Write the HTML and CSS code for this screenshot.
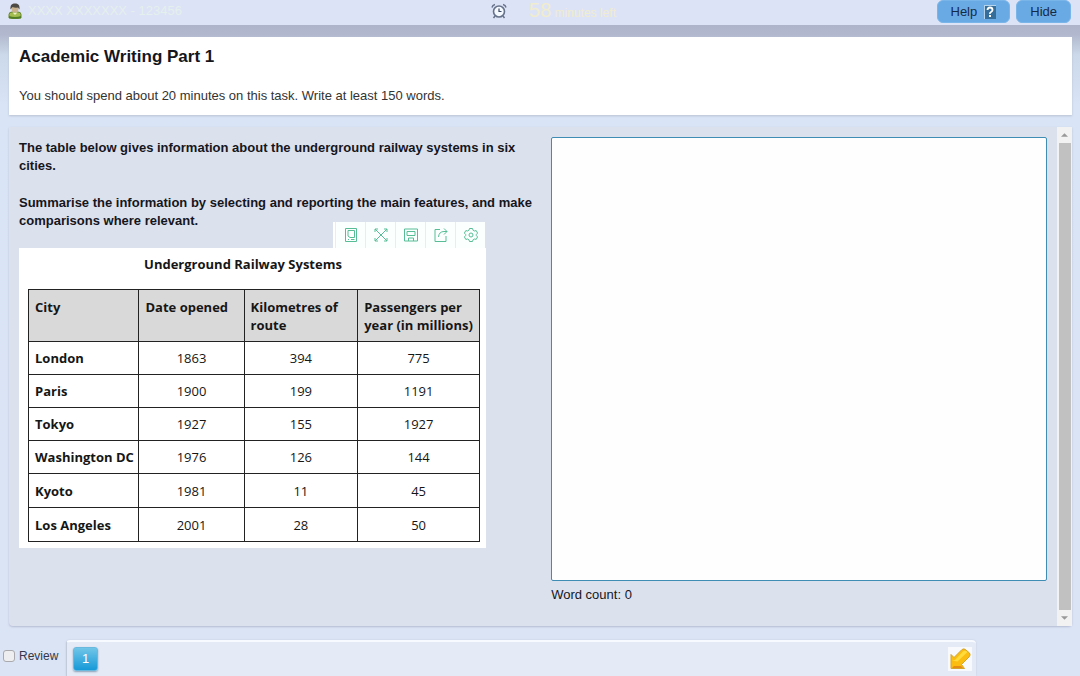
FILE: index.html
```html
<!DOCTYPE html>
<html lang="en">
<head>
<meta charset="utf-8">
<title>Academic Writing Part 1</title>
<link rel="stylesheet" href="styles.css">
</head>
<body>
<header class="topbar">
  <div class="candidate">
    <svg class="user-icon" width="14" height="16" viewBox="0 0 14 16" aria-hidden="true">
      <path d="M1 15V11.5Q1 9 4 9h6q3 0 3 2.500V15Q7 16.500 1 15Z" fill="#a3bd4f" stroke="#66852f"/>
      <path d="M1 13q6 2 12 0v2q-6 1.500-12 0Z" fill="#4f7d25"/>
      <path d="M4.500 9.500L7 12l2.500-2.500Z" fill="#eef0c5"/>
      <circle cx="7" cy="6" r="3.500" fill="#c9b28c"/>
      <path d="M2.500 6.500C2 2 4 .5 7 .5S12 2 11.500 6.500L10 4.500Q7 5 4.500 4Z" fill="#4c4a43"/>
    </svg>
    <span>XXXX XXXXXXX - 123456</span>
  </div>
  <div class="timer">
    <svg width="16" height="16" viewBox="0 0 16 16" fill="none" stroke="#66728a" aria-hidden="true">
      <circle cx="8" cy="8.500" r="5.500" fill="#f4f8ff" stroke-width="1.600"/>
      <path d="M8 5.500v3h2.500" stroke="#3d4a63" stroke-width="1.200"/>
      <path d="M1 4.500Q1.500 2 4 1.500M12 1.500q2.500.5 3 3M4 13l-1.500 2M12 13l1.500 2" stroke-width="1.500"/>
    </svg>
    <span class="time"><span class="time-value">58</span> minutes left</span>
  </div>
  <div class="actions">
    <button type="button" class="action">Help
      <svg width="12" height="14" viewBox="0 0 12 14" aria-hidden="true">
        <rect width="12" height="14" fill="#356e9b"/>
        <path d="M0 14V0h12" fill="none" stroke="#b5d3ea" stroke-width="2"/>
        <path d="M3.500 5Q3.500 2.500 6 2.500T8.500 5Q8.500 6.200 7 7T6 9" fill="none" stroke="#fff" stroke-width="1.800"/>
        <rect x="5" y="10" width="2" height="2" fill="#fff"/>
      </svg>
    </button>
    <button type="button" class="action">Hide</button>
  </div>
</header>
<div class="page">
  <section class="intro">
    <h1>Academic Writing Part 1</h1>
    <p>You should spend about 20 minutes on this task. Write at least 150 words.</p>
  </section>
  <main class="task">
    <section class="question">
      <p>The table below gives information about the underground railway systems in six cities.</p>
      <p>Summarise the information by selecting and reporting the main features, and make comparisons where relevant.</p>
      <figure class="sheet">
        <div class="tools">
          <button type="button" aria-label="Mobile view"><svg viewBox="0 0 14 14"><path d="M1.500 .5h11v13h-11zM4 2.500h6.500v7H6L4 8zM4 11.500h1M7 11.500h3.500"/></svg></button>
          <button type="button" aria-label="Expand"><svg viewBox="0 0 14 14"><path d="M1 4V1h3M10 1h3v3M13 10v3h-3M4 13H1v-3M1 1l12 12M13 1L1 13"/></svg></button>
          <button type="button" aria-label="Save"><svg viewBox="0 0 14 14"><path d="M.5 1h13v12H.5zM3 3.500h8v4H3zM4.500 13V10h5v3"/></svg></button>
          <button type="button" aria-label="Share"><svg viewBox="0 0 14 14"><path d="M6 1.500H1v12h11V8M4.500 9Q5 3.500 10 3.500h3M10 .5l3 3-3 3"/></svg></button>
          <button type="button" aria-label="Settings"><svg viewBox="0 0 14 14"><path d="M5.500.5h3l.6 1.800 1.200.7 1.900-.4 1.400 2.500L12.300 6.500v1l1.300 1.400-1.400 2.500-1.900-.4-1.200.7-.6 1.800h-3l-.6-1.800-1.200-.7-1.900.4L.4 8.900l1.300-1.400v-1L.4 5.100l1.400-2.500 1.900.4 1.200-.7Z"/><circle cx="7" cy="7" r="2"/></svg></button>
        </div>
        <table>
          <caption>Underground Railway Systems</caption>
          <colgroup><col class="c-city"><col class="c-date"><col class="c-route"><col class="c-pass"></colgroup>
          <thead><tr><th scope="col">City</th><th scope="col">Date opened</th><th scope="col">Kilometres of route</th><th scope="col">Passengers per year (in millions)</th></tr></thead>
          <tbody>
            <tr><th scope="row">London</th><td>1863</td><td>394</td><td>775</td></tr>
            <tr><th scope="row">Paris</th><td>1900</td><td>199</td><td>1191</td></tr>
            <tr><th scope="row">Tokyo</th><td>1927</td><td>155</td><td>1927</td></tr>
            <tr><th scope="row">Washington DC</th><td>1976</td><td>126</td><td>144</td></tr>
            <tr><th scope="row">Kyoto</th><td>1981</td><td>11</td><td>45</td></tr>
            <tr><th scope="row">Los Angeles</th><td>2001</td><td>28</td><td>50</td></tr>
          </tbody>
        </table>
      </figure>
    </section>
    <section class="answer">
      <textarea aria-label="Your answer"></textarea>
      <p>Word count: 0</p>
    </section>
    <div class="scrollbar" aria-hidden="true">
      <svg viewBox="0 0 8 4"><path d="M0 4l4-4 4 4Z"/></svg>
      <div class="thumb"></div>
      <svg viewBox="0 0 8 4"><path d="M0 0l4 4 4-4Z"/></svg>
    </div>
  </main>
</div>
<footer class="footer">
  <label class="review"><input type="checkbox">Review</label>
  <nav class="parts">
    <button type="button" class="part">1</button>
    <button type="button" class="next" aria-label="Next">
      <svg width="22" height="22" viewBox="0 0 22 22" aria-hidden="true">
        <path d="M2 20.500V6.500l3 3L13 1.500q2-1.500 4 .5l3.500 3q1.500 2-.5 4L12.500 16.500l3 4Z" fill="#fbbd10" stroke="#d4a52c"/>
        <path d="M3 12.500l3-.5L14.500 3q2-1 4 1L8.500 13.500Z" fill="#ffdb3b"/>
        <path d="M3 20l2-2h7l2 2Z" fill="#e78c12"/>
      </svg>
    </button>
  </nav>
</footer>
</body>
</html>
```
FILE: styles.css
```css
* { box-sizing: border-box; }
body {
  margin: 0;
  min-height: 100vh;
  display: flex;
  flex-direction: column;
  background: #dbe4f5;
  color: #15161c;
  font: 13px/18px "Liberation Sans", Arial, sans-serif;
}
h1, p, figure { margin: 0; }
button { font: inherit; color: inherit; border: 0; padding: 0; }

.topbar {
  display: grid;
  grid-template-columns: 1fr auto 1fr;
  height: 25px;
  padding: 0 9px 0 8px;
  background: #dde3f6;
}
.candidate, .timer { display: flex; align-items: center; padding-bottom: 3px; }
.candidate { gap: 6px; color: #e4f0ed; }
.timer { gap: 22px; padding-left: 28px; }
.time { color: #f0ecce; font-size: 12px; }
.time-value { font-size: 20px; }
.actions { display: flex; justify-content: flex-end; gap: 6px; }
.action {
  display: flex;
  align-items: center;
  justify-content: center;
  gap: 7px;
  height: 23px;
  padding: 0 13px;
  border: 1px solid #79b5e8;
  border-radius: 6px;
  background: #69aae5;
  color: #152b45;
}

.page {
  flex: 1;
  display: flex;
  flex-direction: column;
  gap: 12px;
  padding: 12px 8px 14px 9px;
  background: linear-gradient(#aeb5ca 0, #b2b9ce 10px, #cbd9ea 30px, #d9e4f6 80px, #dbe4f5);
}
.intro {
  padding: 10px 10px 10px;
  background: #fff;
  box-shadow: 0 1px 2px #b9c2d4;
}
.intro h1 { margin-bottom: 20px; font-size: 17px; line-height: 20px; }
.intro p { color: #333; }

.task {
  flex: 1;
  display: flex;
  background: #dce1ee;
  border-radius: 0 0 4px 4px;
  box-shadow: 0 1px 2px #b3bcd2;
}
.question { flex: 533; min-width: 0; padding: 12px 10px 0; }
.question p { margin-bottom: 19px; font-weight: bold; }
.question p + p { margin-bottom: 18px; }
.sheet {
  position: relative;
  width: 467px;
  max-width: 100%;
  padding: 7px 6px 6px 9px;
  background: #fff;
}
.tools {
  position: absolute;
  right: 1px;
  bottom: 100%;
  display: flex;
  padding-left: 2px;
  background: #fff;
}
.tools button {
  display: grid;
  place-items: center;
  width: 30px;
  height: 26px;
  border-left: 1px solid #e8eeee;
  background: #fbfffd;
}
.tools svg { width: 14px; height: 14px; fill: none; stroke: #56bd97; }

table {
  width: 100%;
  table-layout: fixed;
  border-collapse: collapse;
  font: 13px/18px "Open Sans", "Noto Sans", sans-serif;
  color: #161616;
}
caption { padding: 0 22px 16px 0; font-weight: bold; }
.c-city { width: 24.5%; }
.c-date { width: 23.3%; }
.c-route { width: 25.2%; }
.c-pass { width: 27%; }
th, td { height: 33px; padding: 0 6px; border: 1px solid #222; text-align: center; }
tr:nth-child(n+5) td { height: 34px; }
th { text-align: left; white-space: nowrap; }
thead th { height: 52px; padding-top: 8px; background: #d9d9d9; vertical-align: top; white-space: normal; }

.answer { flex: 515; display: flex; flex-direction: column; min-width: 0; padding: 10px 10px 22px 9px; }
.answer textarea {
  flex: 1;
  width: 100%;
  margin-bottom: 5px;
  padding: 6px;
  border: 1px solid #3f8cb5;
  border-radius: 2px;
  background: #fefefe;
  font: inherit;
  resize: none;
}
.scrollbar {
  display: flex;
  flex-direction: column;
  align-items: center;
  width: 15px;
  gap: 6px;
  padding: 6px 2px;
  background: #f2f2f3;
}
.scrollbar svg { width: 7px; height: 4px; fill: #999; }
.thumb { flex: 1; width: 12px; background: #c1c1c2; }

.footer { display: flex; height: 36px; padding-right: 104px; }
.review { display: flex; align-items: center; gap: 4px; width: 66px; padding: 0 0 4px 3px; font-size: 12px; color: #33384a; }
.review input {
  appearance: none;
  width: 12px;
  height: 12px;
  margin: 0;
  border: 1px solid #aaa9ad;
  border-radius: 3px;
  background: #eeeef0;
}
.parts {
  flex: 1;
  display: flex;
  align-items: center;
  justify-content: space-between;
  padding: 0 4px 0 6px;
  border-top: 2px solid #f7faff;
  border-left: 1px solid #c1cbd9;
  border-radius: 4px 4px 0 0;
  background: #e5ebf6;
  box-shadow: 0 0 2px #c0cadb;
}
.part {
  width: 25px;
  height: 24px;
  border: 1px solid #69b9de;
  border-radius: 3px;
  background: linear-gradient(#71c5e8, #1699d8);
  box-shadow: 0 1px 2px #8a9fb5;
  color: #fff;
}
.next { display: grid; place-items: center; width: 24px; height: 24px; background: #f8f9fd; }
```
